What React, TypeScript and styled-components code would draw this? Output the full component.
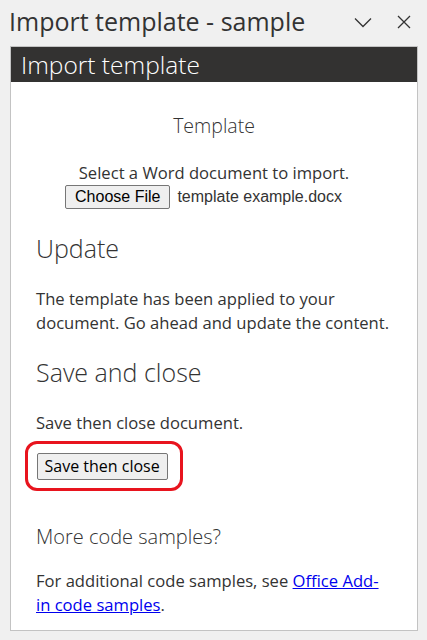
import React from "react";
import styled, { createGlobalStyle } from "styled-components";

const Global = createGlobalStyle`
  html, body { margin: 0; padding: 0; background: #f0f0f0; }
  body { font-family: "Open Sans", "Noto Sans", sans-serif; color: #333; }
`;

const Page = styled.div`
  width: 427px;
  height: 640px;
  display: flex;
  flex-direction: column;
  overflow: hidden;
`;

const TitleBar = styled.div`
  height: 46px;
  display: flex;
  align-items: center;
  padding: 0 16px 0 9px;
`;

const Title = styled.div`
  flex: 1;
  font-size: 25px;
  font-weight: 400;
  color: #333;
  white-space: nowrap;
  margin-top: -4px;
`;

const IconButton = styled.button<{ $gap: number }>`
  background: none;
  border: none;
  padding: 0;
  margin-left: ${(p) => p.$gap}px;
  display: flex;
  align-items: center;
  justify-content: center;
  color: #333;
  margin-top: -2px;
`;

const Panel = styled.div`
  margin: 0 9px 0 10px;
  border: 1px solid #c3c3c3;
  background: #fff;
  height: 585px;
  box-sizing: border-box;
  display: flex;
  flex-direction: column;
`;

const PanelHeader = styled.div`
  background: #333231;
  color: #fff;
  height: 35px;
  font-size: 24.5px;
  padding-left: 10px;
  line-height: 35px;
  font-weight: 300;
`;

const Content = styled.div`
  padding: 0 20px 0 25px;
  display: flex;
  flex-direction: column;
`;

const CenterBlock = styled.div`
  text-align: center;
  margin-top: 30px;
  padding-right: 5px;
`;

const SubTitle = styled.div`
  font-size: 19.5px;
  font-weight: 300;
  line-height: 28px;
  margin-bottom: 21px;
`;

const Text = styled.p<{ $maxWidth?: number }>`
  margin: 0;
  font-size: 16.6px;
  line-height: 24px;
  color: #333;
  max-width: ${(p) => (p.$maxWidth ? `${p.$maxWidth}px` : "none")};
`;

const FileRow = styled.div`
  display: flex;
  justify-content: center;
  align-items: center;
  gap: 7px;
  padding-right: 21px;
`;

const NativeButton = styled.button<{ $arial?: boolean }>`
  font-family: ${(p) => (p.$arial ? '"Liberation Sans", Arial, sans-serif' : '"Open Sans", sans-serif')};
  font-size: 16px;
  color: #000;
  background: #efefef;
  border: 1px solid #767676;
  border-radius: 2px;
  padding: 0 ${(p) => (p.$arial ? 9 : 7)}px;
  height: ${(p) => (p.$arial ? "24px" : "27px")};
`;

const FileName = styled.span`
  font-family: "Liberation Sans", Arial, sans-serif;
  font-size: 16px;
  color: #333;
`;

const Heading = styled.h2<{ $size?: number }>`
  margin: 0;
  font-size: ${(p) => p.$size ?? 25}px;
  font-weight: 300;
  color: #333;
  line-height: ${(p) => ((p.$size ?? 25) < 22 ? 28 : 34)}px;
`;

const Section = styled.div<{ $top: number; $gap: number }>`
  margin-top: ${(p) => p.$top}px;
  display: flex;
  flex-direction: column;
  gap: ${(p) => p.$gap}px;
`;

const Highlight = styled.div`
  align-self: flex-start;
  margin: 6px 0 0 -11px;
  padding: 8.5px 12px 8.5px 8.5px;
  border: 3.5px solid #e8141e;
  border-radius: 12px;
  display: flex;
`;

const Link = styled.a`
  color: #0000ee;
  text-decoration: underline;
`;

export default function App() {
  return (
    <Page>
      <Global />
      <TitleBar>
        <Title>Import template - sample</Title>
        <IconButton $gap={20} aria-label="collapse">
          <svg width="18" height="11" viewBox="0 0 18 11">
            <path d="M1 1.5 L9 9.5 L17 1.5" fill="none" stroke="#333" strokeWidth="1.3" />
          </svg>
        </IconButton>
        <IconButton $gap={25} aria-label="close">
          <svg width="14" height="14" viewBox="0 0 14 14">
            <path d="M1 1 L13 13 M13 1 L1 13" fill="none" stroke="#333" strokeWidth="1.3" />
          </svg>
        </IconButton>
      </TitleBar>
      <Panel>
        <PanelHeader>Import template</PanelHeader>
        <Content>
          <CenterBlock>
            <SubTitle>Template</SubTitle>
            <Text>Select a Word document to import.</Text>
            <FileRow>
              <NativeButton $arial>Choose File</NativeButton>
              <FileName>template example.docx</FileName>
            </FileRow>
          </CenterBlock>
          <Section $top={22} $gap={22}>
            <Heading>Update</Heading>
            <Text>
              The template has been applied to your document. Go ahead and update the content.
            </Text>
          </Section>
          <Section $top={20} $gap={22}>
            <Heading>Save and close</Heading>
            <Text>Save then close document.</Text>
          </Section>
          <Highlight>
            <NativeButton>Save then close</NativeButton>
          </Highlight>
          <Section $top={32} $gap={18}>
            <Heading $size={20}>More code samples?</Heading>
            <Text $maxWidth={352}>
              For additional code samples, see <Link href="#">Office Add-in code samples</Link>.
            </Text>
          </Section>
        </Content>
      </Panel>
    </Page>
  );
}
